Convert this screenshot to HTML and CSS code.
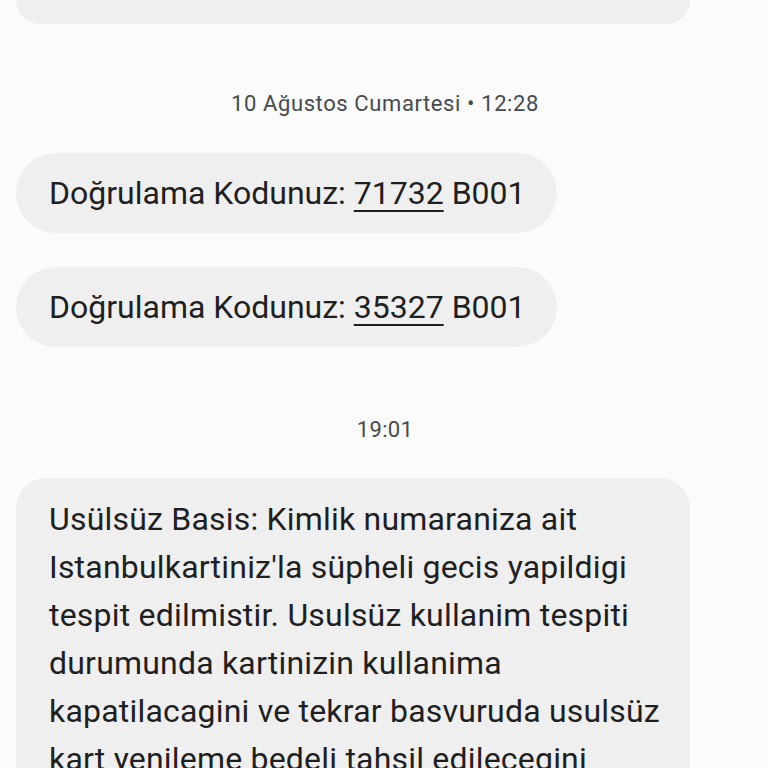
FILE: index.html
```html
<!DOCTYPE html>
<html lang="tr">
<head>
<meta charset="utf-8">
<link rel="stylesheet" href="styles.css">
</head>
<body>
<div class="thread">
  <div class="bubble bubble-cut"></div>
  <div class="stamp stamp-date">10 Ağustos Cumartesi • 12:28</div>
  <div class="bubble pill first">Doğrulama Kodunuz: <span class="code">71732</span> B001</div>
  <div class="bubble pill second">Doğrulama Kodunuz: <span class="code">35327</span> B001</div>
  <div class="stamp stamp-time">19:01</div>
  <div class="bubble long">Usülsüz Basis: Kimlik numaraniza ait<br>Istanbulkartiniz'la süpheli gecis yapildigi<br>tespit edilmistir. Usulsüz kullanim tespiti<br>durumunda kartinizin kullanima<br>kapatilacagini ve tekrar basvuruda usulsüz<br>kart yenileme bedeli tahsil edilecegini<br>bildiririz.</div>
</div>
</body>
</html>
```
FILE: styles.css
```css
html, body {
  margin: 0;
  padding: 0;
  background: #fafbfa;
  height: 768px;
  overflow: hidden;
}
.thread {
  display: flex;
  flex-direction: column;
  align-items: flex-start;
  padding: 0 16px;
  font-family: Roboto, "Noto Sans", sans-serif;
  color: #1f1f1f;
}
.bubble {
  background: #efefef;
  box-sizing: border-box;
  font-size: 32px;
  white-space: nowrap;
}
.bubble-cut {
  width: 674px;
  height: 24px;
  border-radius: 0 0 30px 30px;
}
.stamp {
  align-self: stretch;
  text-align: center;
  font-size: 22px;
  line-height: 24px;
  height: 24px;
  color: #474a4e;
  padding-left: 2px;
}
.stamp-date {
  margin-top: 68px;
  letter-spacing: 0.6px;
}
.stamp-time {
  margin-top: 71px;
  letter-spacing: 0.3px;
}
.pill {
  height: 80px;
  line-height: 80px;
  padding: 0 31px 0 33px;
  border-radius: 40px;
}
.first {
  margin-top: 37px;
}
.second {
  margin-top: 34px;
}
.code {
  text-decoration: underline;
  text-decoration-thickness: 2px;
  text-underline-offset: 6px;
}
.long {
  margin-top: 36px;
  width: 674px;
  padding: 17px 31px 20px 33px;
  line-height: 48px;
  letter-spacing: 0.2px;
  border-radius: 30px;
}
```
